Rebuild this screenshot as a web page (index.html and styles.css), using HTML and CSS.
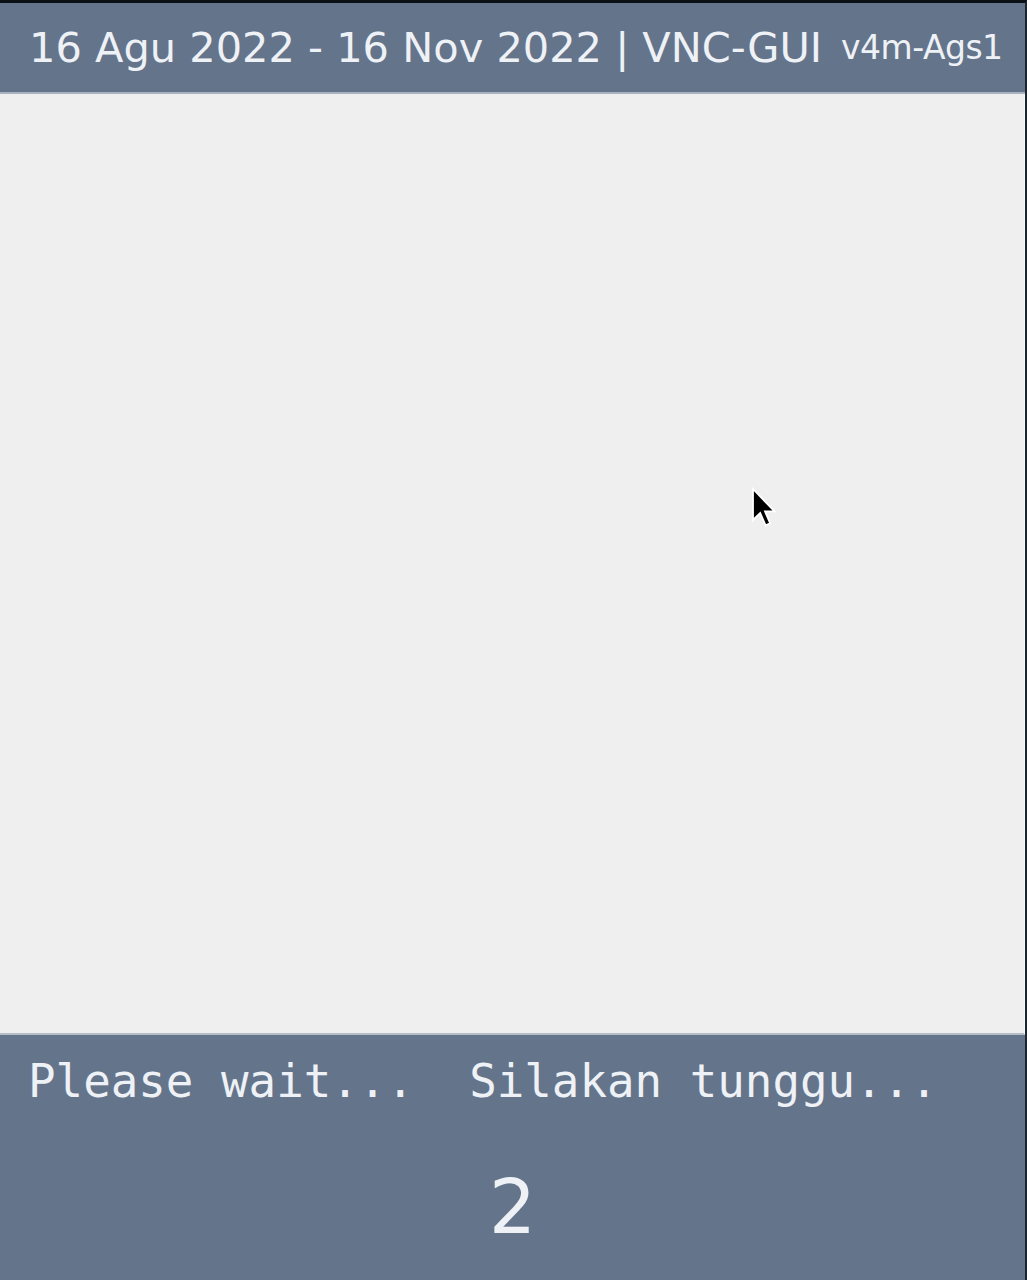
FILE: index.html
```html
<!DOCTYPE html>
<html lang="id">
<head>
<meta charset="utf-8">
<title>VNC-GUI</title>
<link rel="stylesheet" href="styles.css">
</head>
<body>
<div class="screen">
  <header class="titlebar">
    <span class="title">16 Agu 2022 - 16 Nov 2022 | VNC-GUI</span>
    <span class="version">v4m-Ags1</span>
  </header>
  <main class="canvas">
    <svg class="cursor" width="26" height="42" viewBox="0 0 13 21" aria-hidden="true">
      <path d="M1 1 L1 16.5 L4.6 13 L7.3 19.2 L9.6 18.2 L7 12.2 L11.8 12.2 Z" fill="#000" stroke="#fff" stroke-width="0.9" stroke-linejoin="miter"/>
    </svg>
  </main>
  <footer class="status">
    <div class="wait">Please wait...  Silakan tunggu...</div>
    <div class="count">2</div>
  </footer>
</div>
</body>
</html>
```
FILE: styles.css
```css
html, body {
  margin: 0;
  padding: 0;
  background: #0b0f16;
}

.screen {
  width: 1025px;
  height: 1277px;
  border-top: 3px solid #0b0f16;
  border-right: 2px solid #1c2430;
  display: flex;
  flex-direction: column;
  overflow: hidden;
}

.titlebar {
  height: 89px;
  flex: 0 0 89px;
  background: #64748b;
  border-bottom: 2px solid #a9b1bd;
  display: flex;
  align-items: center;
  padding: 0 0 0 29px;
  color: #eef1f5;
  font-family: "DejaVu Sans", sans-serif;
  white-space: nowrap;
}

.title {
  font-size: 41.5px;
  letter-spacing: 0;
}

.version {
  font-size: 33px;
  margin-left: 19px;
  letter-spacing: -0.5px;
}

.canvas {
  flex: 1 1 auto;
  background: #efefef;
  position: relative;
  border-bottom: 2px solid #b4bcc7;
  border-right: 1px solid #f7f7f7;
}

.cursor {
  position: absolute;
  left: 751px;
  top: 393px;
}

.status {
  height: 245px;
  flex: 0 0 245px;
  background: #64748b;
  color: #eef1f5;
  display: flex;
  flex-direction: column;
}

.wait {
  font-family: "DejaVu Sans Mono", monospace;
  font-size: 45.8px;
  white-space: pre;
  padding: 18px 0 0 28px;
  line-height: 56px;
}

.count {
  font-family: "DejaVu Sans", sans-serif;
  font-size: 74px;
  text-align: center;
  line-height: 80px;
  margin-top: 58px;
}
```
